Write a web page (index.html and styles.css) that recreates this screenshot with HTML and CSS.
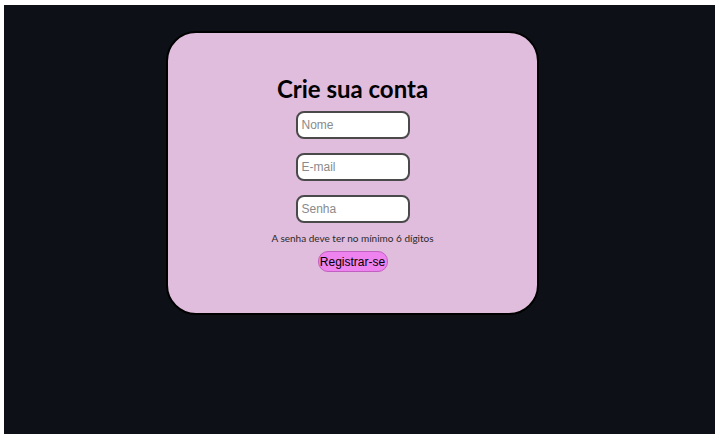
FILE: index.html
```html
<!DOCTYPE html>
<html lang="pt-BR">
<head>
<meta charset="utf-8">
<title>Crie sua conta</title>
<link rel="stylesheet" href="styles.css">
</head>
<body>
<div class="page">
  <form class="card">
    <h1 class="title">Crie sua conta</h1>
    <input class="field" type="text" placeholder="Nome">
    <input class="field" type="email" placeholder="E-mail">
    <input class="field" type="password" placeholder="Senha">
    <p class="hint">A senha deve ter no mínimo 6 dígitos</p>
    <button class="btn" type="button">Registrar-se</button>
  </form>
</div>
</body>
</html>
```
FILE: styles.css
```css
html, body {
  margin: 0;
  padding: 0;
  background: #ffffff;
}
.page {
  margin: 5px 5px 5px 4px;
  height: 429px;
  background: #0d1117;
  padding-top: 26px;
  box-sizing: border-box;
}
.card {
  margin: 0 0 0 162px;
  width: 373px;
  height: 284px;
  box-sizing: border-box;
  background: #e0bcdd;
  border: 2px solid #000;
  border-radius: 30px;
  display: flex;
  flex-direction: column;
  align-items: center;
  padding-top: 42px;
}
.title {
  margin: 0 0 8px 0;
  font-family: Lato, sans-serif;
  font-size: 24px;
  font-weight: 700;
  line-height: 28px;
  color: #000;
}
.field {
  width: 114px;
  height: 28px;
  box-sizing: border-box;
  border: 2px solid #4a4a4a;
  border-radius: 8px;
  background: #fff;
  padding: 0 4px;
  margin: 0 0 14px 0;
  font-family: "Liberation Sans", Arial, sans-serif;
  font-size: 12px;
  outline: none;
}
.field::placeholder {
  color: #8a8a8a;
}
.field:last-of-type {
  margin-bottom: 8px;
}
.hint {
  margin: 0 0 6px 0;
  font-family: Lato, sans-serif;
  font-size: 10px;
  line-height: 14px;
  color: #2a2a2a;
}
.btn {
  width: 70px;
  height: 21px;
  box-sizing: border-box;
  background: #ee82ee;
  border: 1px solid #c060c0;
  border-radius: 10px;
  font-family: "Liberation Sans", Arial, sans-serif;
  font-size: 12px;
  color: #000;
  padding: 0;
}
```
